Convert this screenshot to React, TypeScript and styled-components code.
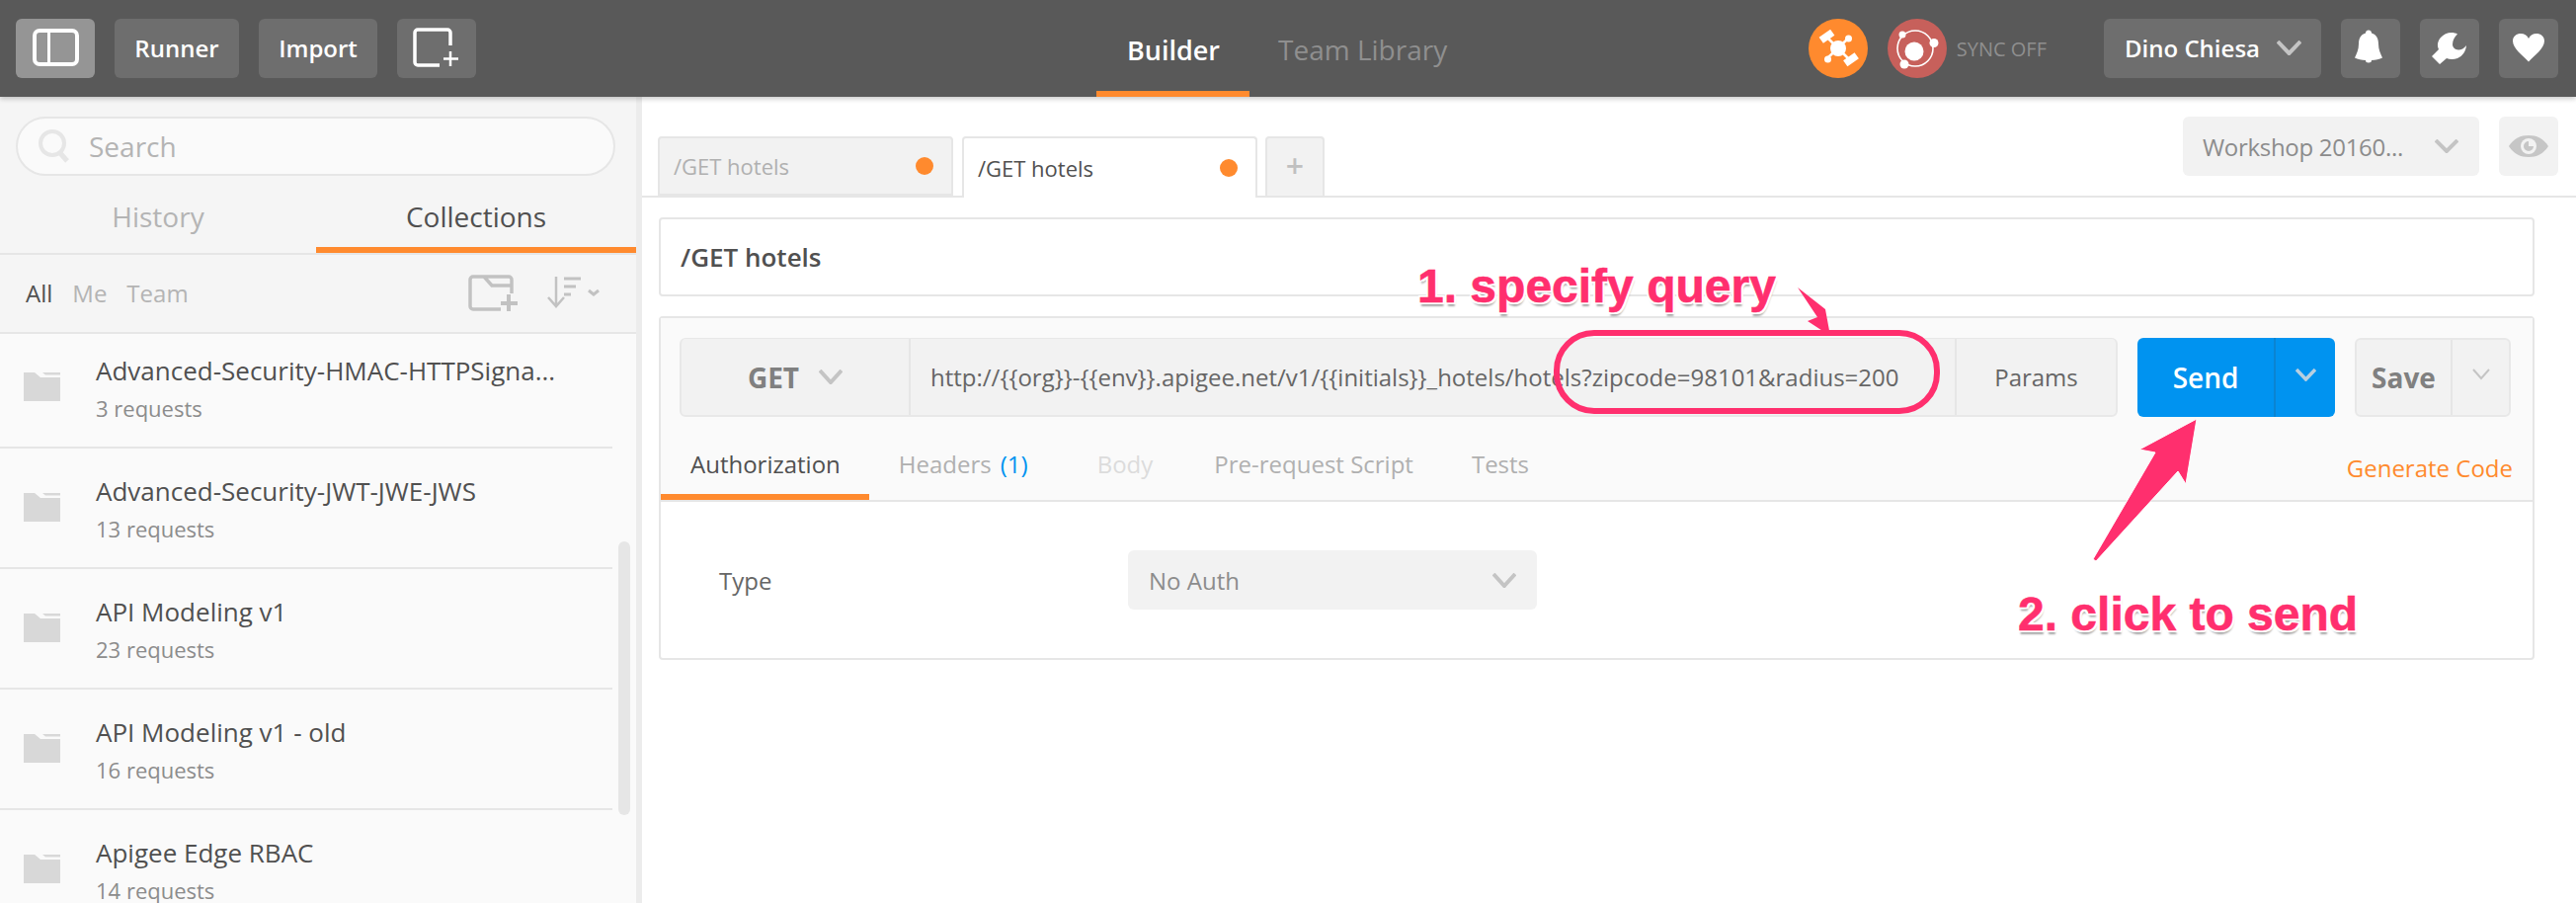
import React from "react";
import styled, { createGlobalStyle } from "styled-components";

const ORANGE = "#ff8a2e";
const PINK = "#ff2f6e";

const GlobalStyle = createGlobalStyle`
  html, body {
    margin: 0;
    padding: 0;
    background: #ffffff;
    font-family: "Open Sans", "Liberation Sans", sans-serif;
    color: #505050;
    overflow: hidden;
  }
  * {
    box-sizing: border-box;
  }
`;

const Page = styled.div`
  position: relative;
  width: 2608px;
  height: 914px;
  overflow: hidden;
  display: flex;
  flex-direction: column;
`;

/* ---------- header ---------- */

const Header = styled.header`
  position: relative;
  z-index: 2;
  flex: none;
  height: 98px;
  background: #595959;
  box-shadow: 0 2px 5px rgba(0, 0, 0, 0.22);
  display: flex;
  align-items: stretch;
  padding: 0 18px 0 16px;
`;

const HeaderGroup = styled.div`
  display: flex;
  align-items: center;
  gap: 20px;
`;

const HeaderButton = styled.button<{ $active?: boolean; $w?: number }>`
  width: ${(p) => p.$w ?? 60}px;
  height: 60px;
  padding: 0 0 2px;
  border: 0;
  border-radius: 6px;
  background: ${(p) => (p.$active ? "#959595" : "#6e6e6e")};
  color: #ffffff;
  font-family: inherit;
  font-size: 24px;
  font-weight: 600;
  display: flex;
  align-items: center;
  justify-content: center;
`;

const UserButton = styled(HeaderButton)`
  justify-content: space-between;
  padding: 0 20px 2px 21px;
  font-size: 24px;
  font-weight: 600;
`;

const NavTabs = styled.nav`
  display: flex;
  margin-left: 628px;
`;

const NavTab = styled.div<{ $active?: boolean }>`
  display: flex;
  align-items: center;
  padding: 8px 30px 0 ${(p) => (p.$active ? 31 : 29)}px;
  font-size: ${(p) => (p.$active ? 27 : 28)}px;
  font-weight: ${(p) => (p.$active ? 600 : 400)};
  color: ${(p) => (p.$active ? "#ffffff" : "#8f8f8f")};
  border-bottom: 6px solid ${(p) => (p.$active ? ORANGE : "transparent")};
`;

const HeaderRight = styled(HeaderGroup)`
  margin-left: auto;
`;

const SyncGroup = styled.div`
  display: flex;
  align-items: center;
  gap: 11px;
  margin-right: 38px;
`;

const SyncText = styled.span`
  font-size: 20px;
  color: #8f8f8f;
  margin-left: -1px;
`;

/* ---------- body ---------- */

const Body = styled.div`
  flex: 1;
  min-height: 0;
  display: flex;
`;

const Sidebar = styled.aside`
  position: relative;
  flex: none;
  width: 650px;
  background: #f5f5f5;
  border-right: 6px solid #ececec;
  display: flex;
  flex-direction: column;
`;

const SearchBox = styled.div`
  flex: none;
  height: 60px;
  margin: 20px 21px 0 16px;
  padding: 0 0 0 20px;
  border: 2px solid #e6e6e6;
  border-radius: 30px;
  background: #fafafa;
  display: flex;
  align-items: center;
  gap: 18px;
  font-size: 28px;
  color: #b4b4b4;
`;

const SideTabs = styled.div`
  flex: none;
  height: 80px;
  display: grid;
  grid-template-columns: 320px 324px;
  border-bottom: 2px solid #e6e6e6;
`;

const SideTab = styled.div<{ $active?: boolean }>`
  display: flex;
  align-items: center;
  justify-content: center;
  padding-top: 10px;
  font-size: 28px;
  color: ${(p) => (p.$active ? "#505050" : "#b4b4b4")};
  border-bottom: 6px solid ${(p) => (p.$active ? ORANGE : "transparent")};
`;

const FilterRow = styled.div`
  flex: none;
  height: 80px;
  display: flex;
  align-items: center;
  padding: 0 36px 2px 26px;
  border-bottom: 2px solid #e6e6e6;
`;

const FilterItem = styled.span<{ $active?: boolean }>`
  font-size: 24px;
  margin-right: 20px;
  color: ${(p) => (p.$active ? "#505050" : "#b4b4b4")};
`;

const FilterIcons = styled.div`
  margin-left: auto;
  display: flex;
  align-items: center;
  gap: 30px;
`;

const List = styled.div`
  flex: 1;
  min-height: 0;
  overflow: hidden;
  background: #fafafa;
`;

const ListInner = styled.div`
  margin-top: -6px;
`;

const Row = styled.div`
  width: 620px;
  height: 122px;
  display: flex;
  align-items: center;
  gap: 36px;
  padding: 0 0 2px 24px;
  border-bottom: 2px solid #e6e6e6;
`;

const RowText = styled.div`
  display: flex;
  flex-direction: column;
  margin-top: 2px;
`;

const RowTitle = styled.div`
  font-size: 26px;
  line-height: 36px;
  color: #505050;
  white-space: nowrap;
`;

const RowSub = styled.div`
  font-size: 22px;
  line-height: 30px;
  margin-top: 5px;
  color: #8c8c8c;
`;

const ScrollThumb = styled.div`
  position: absolute;
  left: 626px;
  top: 450px;
  width: 12px;
  height: 277px;
  border-radius: 6px;
  background: #e6e6e6;
`;

const Main = styled.main`
  flex: 1;
  min-width: 0;
  display: flex;
  flex-direction: column;
`;

const TabBar = styled.div`
  flex: none;
  height: 102px;
  padding: 20px 18px 0 16px;
  border-bottom: 2px solid #e6e6e6;
  display: flex;
  align-items: flex-start;
  gap: 9px;
`;

const ReqTab = styled.div<{ $active?: boolean }>`
  width: 299px;
  height: ${(p) => (p.$active ? 62 : 60)}px;
  margin-top: 20px;
  padding: 0 18px 0 14px;
  border: 2px solid #e6e6e6;
  border-bottom: ${(p) => (p.$active ? "0" : "2px solid #e6e6e6")};
  border-radius: 4px 4px 0 0;
  background: ${(p) => (p.$active ? "#ffffff" : "#f2f2f2")};
  display: flex;
  align-items: center;
  justify-content: space-between;
  font-size: 22px;
  color: ${(p) => (p.$active ? "#505050" : "#b0b0b0")};
`;

const Dot = styled.span`
  width: 18px;
  height: 18px;
  border-radius: 50%;
  background: ${ORANGE};
`;

const PlusTab = styled.div`
  width: 60px;
  height: 60px;
  margin: 20px 0 0 -1px;
  border: 2px solid #e6e6e6;
  border-bottom: 0;
  border-radius: 4px 4px 0 0;
  background: #f2f2f2;
  color: #c0c0c0;
  font-size: 32px;
  font-weight: 600;
  display: flex;
  align-items: center;
  justify-content: center;
  padding-bottom: 4px;
`;

const Environment = styled.div`
  margin-left: auto;
  display: flex;
  gap: 20px;
`;

const EnvSelect = styled.div`
  width: 300px;
  height: 60px;
  border-radius: 6px;
  background: #f2f2f2;
  display: flex;
  align-items: center;
  justify-content: space-between;
  padding: 0 21px 0 20px;
  font-size: 24px;
  letter-spacing: -0.3px;
  color: #8c8c8c;
`;

const EyeButton = styled.div`
  width: 60px;
  height: 60px;
  border-radius: 6px;
  background: #f2f2f2;
  display: flex;
  align-items: center;
  justify-content: center;
`;

const Content = styled.div`
  padding: 20px 42px 0 17px;
  display: flex;
  flex-direction: column;
  gap: 20px;
`;

const NameBox = styled.div`
  height: 80px;
  border: 2px solid #e6e6e6;
  border-radius: 4px;
  padding: 0 20px;
  display: flex;
  align-items: center;
  font-size: 26px;
  font-weight: 600;
  color: #505050;
`;

const RequestBox = styled.div`
  height: 348px;
  border: 2px solid #e6e6e6;
  border-radius: 4px;
  display: flex;
  flex-direction: column;
`;

const RequestTop = styled.div`
  flex: none;
  height: 186px;
  background: #fafafa;
  border-bottom: 2px solid #e6e6e6;
  display: flex;
  flex-direction: column;
`;

const UrlRow = styled.div`
  flex: none;
  height: 80px;
  margin-top: 20px;
  padding: 0 19px;
  display: flex;
  gap: 20px;
`;

const UrlGroup = styled.div`
  width: 1456px;
  display: flex;
  background: #f2f2f2;
  border: 2px solid #e8e8e8;
  border-top-width: 1px;
  border-radius: 6px;
`;

const Method = styled.div`
  width: 232px;
  display: flex;
  align-items: center;
  justify-content: center;
  gap: 20px;
  border-right: 2px solid #e6e6e6;
  font-size: 28px;
  font-weight: 700;
  color: #808080;
`;

const UrlText = styled.div`
  flex: 1;
  display: flex;
  align-items: center;
  padding-left: 20px;
  font-size: 24px;
  color: #666666;
  white-space: nowrap;
  overflow: hidden;
`;

const ParamsButton = styled.div`
  width: 163px;
  display: flex;
  align-items: center;
  justify-content: center;
  border-left: 2px solid #e6e6e6;
  font-size: 24px;
  color: #666666;
`;

const SplitButton = styled.div<{ $primary?: boolean; $w: number }>`
  width: ${(p) => p.$w}px;
  display: flex;
  border-radius: 6px;
  background: ${(p) => (p.$primary ? "#0093f0" : "#f2f2f2")};
  border: ${(p) => (p.$primary ? "0" : "2px solid #e8e8e8")};
`;

const SplitLabel = styled.div<{ $primary?: boolean; $w: number }>`
  width: ${(p) => p.$w}px;
  display: flex;
  align-items: center;
  justify-content: center;
  font-size: 28px;
  font-weight: ${(p) => (p.$primary ? 600 : 700)};
  color: ${(p) => (p.$primary ? "#ffffff" : "#808080")};
  border-right: 2px solid ${(p) => (p.$primary ? "#0a84d2" : "#e6e6e6")};
`;

const SplitCaret = styled.div`
  flex: 1;
  display: flex;
  align-items: center;
  justify-content: center;
  padding-bottom: 6px;
`;

const ReqTabs = styled.div`
  flex: 1;
  display: flex;
  align-items: stretch;
`;

const ReqSection = styled.div<{ $active?: boolean; $disabled?: boolean }>`
  padding: 16px ${(p) => (p.$disabled ? 32 : 29)}px 0 30px;
  display: flex;
  align-items: center;
  font-size: 24px;
  color: ${(p) => (p.$active ? "#505050" : p.$disabled ? "#dcdcdc" : "#b0b0b0")};
  border-bottom: 6px solid ${(p) => (p.$active ? ORANGE : "transparent")};
`;

const Count = styled.span`
  color: #0093f0;
  margin-left: 9px;
  margin-right: 11px;
`;

const GenerateCode = styled.div`
  margin-left: auto;
  padding: 18px 20px 0 0;
  display: flex;
  align-items: center;
  font-size: 24px;
  color: ${ORANGE};
`;

const AuthBody = styled.div`
  flex: 1;
  display: flex;
  align-items: center;
  padding-left: 59px;
`;

const AuthLabel = styled.div`
  width: 414px;
  font-size: 24px;
  color: #666666;
`;

const AuthSelect = styled.div`
  width: 414px;
  height: 60px;
  padding: 0 21px;
  border-radius: 6px;
  background: #f2f2f2;
  display: flex;
  align-items: center;
  justify-content: space-between;
  font-size: 24px;
  color: #8c8c8c;
`;

/* ---------- annotations drawn over the app ---------- */

const Overlay = styled.svg`
  position: absolute;
  left: 0;
  top: 0;
  z-index: 3;
  pointer-events: none;
`;

const Callout = styled.div<{ $x: number; $y: number }>`
  position: absolute;
  z-index: 4;
  left: ${(p) => p.$x}px;
  top: ${(p) => p.$y}px;
  font-family: "Liberation Sans", Arial, sans-serif;
  font-size: 48px;
  line-height: 56px;
  font-weight: 700;
  white-space: nowrap;
  color: ${PINK};
  -webkit-text-stroke: 0.6px ${PINK};
  text-shadow: -2px 0 0 #fff, 2px 0 0 #fff, 0 -2px 0 #fff, 0 2px 0 #fff,
    -2px -2px 0 #fff, 2px -2px 0 #fff, -2px 2px 0 #fff, 2px 2px 0 #fff,
    1px 4px 2px rgba(0, 0, 0, 0.35);
`;

/* ---------- icons ---------- */

const Chevron = ({ w, h, color = "#c4c4c4", sw = 4 }: { w: number; h: number; color?: string; sw?: number }) => (
  <svg width={w} height={h} viewBox={`0 0 ${w} ${h}`}>
    <polyline points={`1,1 ${w / 2},${h - 2} ${w - 1},1`} fill="none" stroke={color} strokeWidth={sw} />
  </svg>
);

const SidebarIcon = () => (
  <svg width="47" height="38" viewBox="0 0 47 38">
    <rect x="2" y="2" width="43" height="34" rx="5" fill="none" stroke="#fff" strokeWidth="4" />
    <rect x="15" y="2" width="3" height="34" fill="#fff" />
  </svg>
);

const NewTabIcon = () => (
  <svg width="48" height="40" viewBox="0 0 48 40">
    <path
      d="M38 18V5a3 3 0 0 0-3-3H5a3 3 0 0 0-3 3v30a3 3 0 0 0 3 3h22"
      fill="none"
      stroke="#fff"
      strokeWidth="3.5"
    />
    <path d="M38 24v15M31 31.500h15" fill="none" stroke="#fff" strokeWidth="2.500" />
  </svg>
);

const RunnerBadge = () => (
  <svg width="60" height="60" viewBox="0 0 60 60">
    <circle cx="30" cy="30" r="30" fill={ORANGE} />
    <path d="M18 18L42 42M40 20L19 40" stroke="#fff" strokeWidth="2.500" />
    <circle cx="30" cy="30" r="8" fill="#fff" />
    <circle cx="40.500" cy="20" r="3.500" fill="#fff" />
    <circle cx="19.500" cy="41" r="3.500" fill="#fff" />
    <rect x="11.500" y="14" width="14" height="7.500" transform="rotate(-35 18.500 17.750)" fill="#fff" />
    <rect x="36" y="37.500" width="14" height="7.500" transform="rotate(-35 43 41.250)" fill="#fff" />
  </svg>
);

const SyncBadge = () => (
  <svg width="60" height="60" viewBox="0 0 60 60">
    <circle cx="30" cy="30" r="30" fill="#c7605b" />
    <circle cx="28" cy="30" r="18" fill="none" stroke="#fff" strokeWidth="1.600" />
    <circle cx="27" cy="33" r="9.500" fill="#fff" />
    <circle cx="15" cy="16" r="3.500" fill="#fff" />
    <circle cx="47" cy="24.500" r="4.500" fill="#fff" />
    <circle cx="17" cy="46" r="4.500" fill="#fff" />
  </svg>
);

const BellIcon = () => (
  <svg width="60" height="60" viewBox="0 0 60 60">
    <path
      d="M28 12.500c1.800 0 3 1.200 3 3 5 1.400 7 5.600 7 11 0 5.500 2 9.500 4 14-3 1.600-7 2.300-11 2.500 0 1.800-1.200 2.500-3 2.500s-3-.7-3-2.500c-4-.2-8-.9-11-2.500 2-4.500 4-8.500 4-14 0-5.400 2-9.600 7-11 0-1.800 1.200-3 3-3z"
      fill="#fff"
    />
  </svg>
);

const WrenchIcon = () => (
  <svg width="60" height="60" viewBox="0 0 60 60">
    <path
      d="M38 16.500C33 13.500 25 15 21 20c-3 3.500-4 7.500-2 12l-7 7 8 8 7-6c3 1.300 7 1.500 11 0 5-2 8.500-7 9-13-2.500 3-5 4.500-8 4.500-3.500 0-6-2.800-6-5.500 0-4.500 2-7.500 5-10.500z"
      fill="#fff"
    />
  </svg>
);

const HeartIcon = () => (
  <svg width="60" height="60" viewBox="0 0 60 60">
    <path
      d="M30 44.500C24 38 14 31 14 23.500 14 18.500 18 16 22 16c3.500 0 6.500 1.800 8 5 1.500-3.200 4.500-5 8-5 4 0 8 2.500 8 7.500 0 7.500-10 14.500-16 21z"
      fill="#fff"
    />
  </svg>
);

const SearchIcon = () => (
  <svg width="34" height="36" viewBox="0 0 34 36">
    <circle cx="15" cy="15" r="12" fill="none" stroke="#e6e6e6" strokeWidth="4" />
    <path d="M23 25l7 8" stroke="#e6e6e6" strokeWidth="5" />
  </svg>
);

const NewFolderIcon = () => (
  <svg width="50" height="38" viewBox="0 0 50 38">
    <path
      d="M44 20V6a3 3 0 0 0-3-3H5a3 3 0 0 0-3 3v27a3 3 0 0 0 3 3h28M16 3l8 9h20"
      fill="none"
      stroke="#c2c2c2"
      strokeWidth="3.500"
    />
    <path d="M41 21v17M33 30h17" fill="none" stroke="#c2c2c2" strokeWidth="4" />
  </svg>
);

const SortIcon = () => (
  <svg width="54" height="34" viewBox="0 0 54 34">
    <path d="M9 1v30M1 22l8 9 8-9" fill="none" stroke="#c2c2c2" strokeWidth="2.500" />
    <path d="M17 3h17M17 11h12M17 19h7" fill="none" stroke="#c2c2c2" strokeWidth="3" />
    <path d="M42 15l5 4 5-4" fill="none" stroke="#c2c2c2" strokeWidth="3" />
  </svg>
);

const FolderIcon = () => (
  <svg width="37" height="30" viewBox="0 0 37 30">
    <path d="M0 1h11l6 5h20v24H0z" fill="#d8d8d8" />
    <path d="M19 1h18v2.500H22z" fill="#d8d8d8" />
  </svg>
);

const EyeIcon = () => (
  <svg width="42" height="24" viewBox="0 0 42 24">
    <path d="M1 12C6 4 13 1 21 1s15 3 20 11c-5 8-12 11-20 11S6 20 1 12z" fill="#c6c6c6" />
    <circle cx="21" cy="12" r="8" fill="#f2f2f2" />
    <path d="M21 7a5 5 0 1 0 5 5h-5z" fill="#c6c6c6" />
  </svg>
);

const collections = [
  { name: "Advanced-Security-HMAC-HTTPSigna...", count: 3 },
  { name: "Advanced-Security-JWT-JWE-JWS", count: 13 },
  { name: "API Modeling v1", count: 23 },
  { name: "API Modeling v1 - old", count: 16 },
  { name: "Apigee Edge RBAC", count: 14 },
];

const App: React.FC = () => {
  return (
    <>
      <GlobalStyle />
      <Page>
        <Header>
          <HeaderGroup>
            <HeaderButton $active $w={80}>
              <SidebarIcon />
            </HeaderButton>
            <HeaderButton $w={126}>Runner</HeaderButton>
            <HeaderButton $w={120}>Import</HeaderButton>
            <HeaderButton $w={80}>
              <NewTabIcon />
            </HeaderButton>
          </HeaderGroup>
          <NavTabs>
            <NavTab $active>Builder</NavTab>
            <NavTab>Team Library</NavTab>
          </NavTabs>
          <HeaderRight>
            <RunnerBadge />
            <SyncGroup>
              <SyncBadge />
              <SyncText>SYNC OFF</SyncText>
            </SyncGroup>
            <UserButton $w={220} as="div">
              Dino Chiesa
              <Chevron w={25} h={15} />
            </UserButton>
            <HeaderButton>
              <BellIcon />
            </HeaderButton>
            <HeaderButton>
              <WrenchIcon />
            </HeaderButton>
            <HeaderButton>
              <HeartIcon />
            </HeaderButton>
          </HeaderRight>
        </Header>

        <Body>
          <Sidebar>
            <SearchBox>
              <SearchIcon />
              Search
            </SearchBox>
            <SideTabs>
              <SideTab>History</SideTab>
              <SideTab $active>Collections</SideTab>
            </SideTabs>
            <FilterRow>
              <FilterItem $active>All</FilterItem>
              <FilterItem>Me</FilterItem>
              <FilterItem>Team</FilterItem>
              <FilterIcons>
                <NewFolderIcon />
                <SortIcon />
              </FilterIcons>
            </FilterRow>
            <List>
              <ListInner>
                {collections.map((c) => (
                  <Row key={c.name}>
                    <FolderIcon />
                    <RowText>
                      <RowTitle>{c.name}</RowTitle>
                      <RowSub>{c.count} requests</RowSub>
                    </RowText>
                  </Row>
                ))}
              </ListInner>
            </List>
            <ScrollThumb />
          </Sidebar>

          <Main>
            <TabBar>
              <ReqTab>
                /GET hotels
                <Dot />
              </ReqTab>
              <ReqTab $active>
                /GET hotels
                <Dot />
              </ReqTab>
              <PlusTab>+</PlusTab>
              <Environment>
                <EnvSelect>
                  Workshop 20160...
                  <Chevron w={24} h={14} />
                </EnvSelect>
                <EyeButton>
                  <EyeIcon />
                </EyeButton>
              </Environment>
            </TabBar>

            <Content>
              <NameBox>/GET hotels</NameBox>
              <RequestBox>
                <RequestTop>
                  <UrlRow>
                    <UrlGroup>
                      <Method>
                        GET
                        <Chevron w={24} h={15} />
                      </Method>
                      <UrlText>
                        {"http://{{org}}-{{env}}.apigee.net/v1/{{initials}}_hotels/hotels?zipcode=98101&radius=200"}
                      </UrlText>
                      <ParamsButton>Params</ParamsButton>
                    </UrlGroup>
                    <SplitButton $primary $w={200}>
                      <SplitLabel $primary $w={140}>
                        Send
                      </SplitLabel>
                      <SplitCaret>
                        <Chevron w={21} h={13} color="#b7cfe0" sw={3.5} />
                      </SplitCaret>
                    </SplitButton>
                    <SplitButton $w={158}>
                      <SplitLabel $w={97}>Save</SplitLabel>
                      <SplitCaret>
                        <Chevron w={18} h={12} color="#c4c4c4" sw={2} />
                      </SplitCaret>
                    </SplitButton>
                  </UrlRow>
                  <ReqTabs>
                    <ReqSection $active>Authorization</ReqSection>
                    <ReqSection>
                      Headers<Count>(1)</Count>
                    </ReqSection>
                    <ReqSection $disabled>Body</ReqSection>
                    <ReqSection>Pre-request Script</ReqSection>
                    <ReqSection>Tests</ReqSection>
                    <GenerateCode>Generate Code</GenerateCode>
                  </ReqTabs>
                </RequestTop>
                <AuthBody>
                  <AuthLabel>Type</AuthLabel>
                  <AuthSelect>
                    No Auth
                    <Chevron w={24} h={15} />
                  </AuthSelect>
                </AuthBody>
              </RequestBox>
            </Content>
          </Main>
        </Body>

        <Overlay width="2608" height="914" viewBox="0 0 2608 914">
          <rect x="1576" y="337" width="385" height="79" rx="38" fill="none" stroke={PINK} strokeWidth="6" />
          <path d="M1820 291L1848 313L1853 340L1830 325L1840 321z" fill={PINK} />
          <path
            d="M2224 424L2213 490L2205 477L2122 568L2119 566L2182 458L2166 455z"
            fill={PINK}
            stroke="#ffffff"
            strokeWidth="1"
          />
        </Overlay>
        <Callout $x={1435} $y={262}>
          1. specify query
        </Callout>
        <Callout $x={2043} $y={594}>
          2. click to send
        </Callout>
      </Page>
    </>
  );
};

export default App;
